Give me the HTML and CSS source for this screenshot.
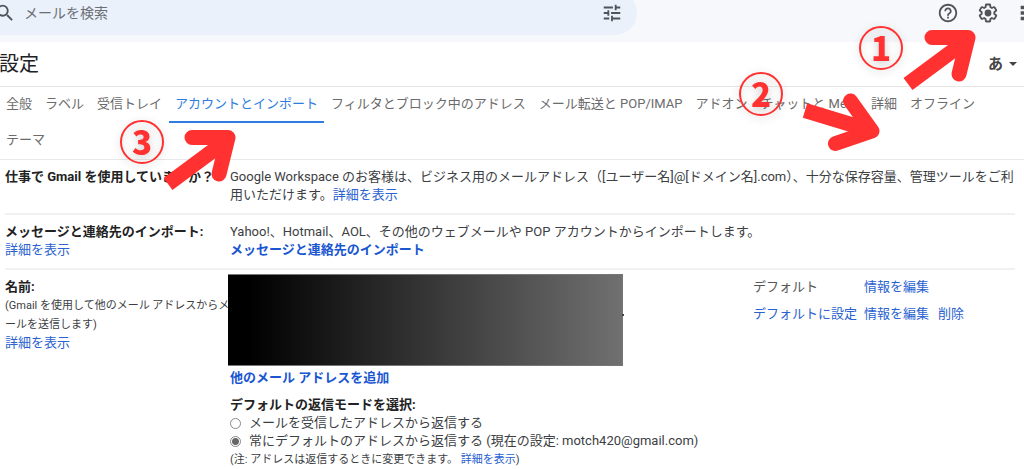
FILE: index.html
```html
<!DOCTYPE html>
<html lang="ja">
<head>
<meta charset="utf-8">
<title>設定</title>
<link rel="stylesheet" href="styles.css">
</head>
<body>
<header class="topbar">
  <form class="search" role="search">
    <svg class="icon search-icon" viewBox="0 0 24 24" aria-hidden="true"><path d="M15.5 14h-.79l-.28-.27A6.47 6.47 0 0 0 16 9.500 6.500 6.500 0 1 0 9.500 16c1.610 0 3.090-.59 4.230-1.570l.27.28v.79l5 4.990L20.490 19l-4.990-5zm-6 0C7.010 14 5 11.990 5 9.500S7.010 5 9.500 5 14 7.010 14 9.500 11.990 14 9.500 14z"/></svg>
    <input class="search-input" type="text" placeholder="メールを検索" aria-label="メールを検索">
    <button class="icon-button" type="button" aria-label="検索オプションを表示">
      <svg class="icon" viewBox="0 0 24 24"><path d="M3 17v2h6v-2H3zM3 5v2h10V5H3zm10 16v-2h8v-2h-8v-2h-2v6h2zM7 9v2H3v2h4v2h2V9H7zm14 4v-2H11v2h10zm-6-4h2V7h4V5h-4V3h-2v6z"/></svg>
    </button>
  </form>
  <div class="tools">
    <button class="icon-button" type="button" aria-label="サポート">
      <svg class="icon" viewBox="0 0 24 24"><path d="M11 18h2v-2h-2v2zm1-16C6.480 2 2 6.480 2 12s4.480 10 10 10 10-4.480 10-10S17.520 2 12 2zm0 18c-4.410 0-8-3.590-8-8s3.590-8 8-8 8 3.590 8 8-3.590 8-8 8zm0-14c-2.210 0-4 1.790-4 4h2c0-1.100.9-2 2-2s2 .9 2 2c0 2-3 1.750-3 5h2c0-2.250 3-2.500 3-5 0-2.210-1.790-4-4-4z"/></svg>
    </button>
    <button class="icon-button" type="button" aria-label="設定">
      <svg class="icon" viewBox="0 0 24 24"><path d="M13.850 22.250h-3.700c-.74 0-1.360-.54-1.450-1.270l-.27-1.890c-.27-.14-.53-.29-.79-.46l-1.800.72c-.7.26-1.470-.03-1.810-.65L2.200 15.530c-.35-.66-.2-1.440.36-1.880l1.530-1.190c-.01-.15-.02-.3-.02-.46 0-.15.01-.31.02-.46l-1.520-1.190c-.59-.45-.74-1.260-.37-1.880l1.850-3.190c.34-.62 1.110-.9 1.790-.63l1.810.73c.26-.17.52-.32.78-.46l.27-1.910c.09-.7.71-1.250 1.440-1.250h3.700c.74 0 1.360.54 1.450 1.270l.27 1.890c.27.14.53.29.79.46l1.800-.72c.71-.26 1.480.03 1.820.65l1.840 3.180c.36.66.2 1.440-.36 1.880l-1.520 1.190c.01.15.02.3.02.46s-.01.31-.02.46l1.520 1.190c.56.45.72 1.230.37 1.860l-1.860 3.220c-.34.62-1.110.9-1.800.63l-1.800-.72c-.26.17-.52.32-.78.46l-.27 1.910c-.1.68-.72 1.220-1.460 1.220zm-3.230-2h2.760l.37-2.550.53-.22c.44-.18.88-.44 1.340-.78l.45-.34 2.380.96 1.380-2.400-2.030-1.580.07-.56c.03-.26.06-.51.06-.78s-.03-.53-.06-.78l-.07-.56 2.030-1.580-1.390-2.400-2.390.96-.45-.35c-.42-.32-.87-.58-1.330-.77l-.52-.22-.37-2.550h-2.760l-.37 2.550-.53.21c-.44.19-.88.44-1.340.79l-.45.33-2.380-.95-1.390 2.390 2.030 1.580-.07.56a7 7 0 0 0-.06.79c0 .26.02.53.06.78l.07.56-2.030 1.580 1.380 2.400 2.390-.96.45.35c.43.33.86.58 1.330.77l.53.22.38 2.550z"/><circle cx="12" cy="12" r="3.700"/></svg>
    </button>
    <button class="icon-button" type="button" aria-label="アプリ">
      <svg class="icon" viewBox="0 0 24 24"><path d="M4 4h4v4H4zm0 6h4v4H4zm0 6h4v4H4zm6-12h4v4h-4zm0 6h4v4h-4zm0 6h4v4h-4zm6-12h4v4h-4zm0 6h4v4h-4zm0 6h4v4h-4z"/></svg>
    </button>
  </div>
</header>

<main>
  <div class="title-row">
    <h1 class="title">設定</h1>
    <button class="input-tool" type="button" aria-label="入力ツール">あ<span class="caret"></span></button>
  </div>

  <nav class="tabs">
    <a class="tab" href="#">全般</a>
    <a class="tab" href="#">ラベル</a>
    <a class="tab" href="#">受信トレイ</a>
    <a class="tab tab-active" href="#" aria-current="page">アカウントとインポート</a>
    <a class="tab" href="#">フィルタとブロック中のアドレス</a>
    <a class="tab" href="#">メール転送と POP/IMAP</a>
    <a class="tab" href="#">アドオン</a>
    <a class="tab" href="#">チャットと Meet</a>
    <a class="tab" href="#">詳細</a>
    <a class="tab" href="#">オフライン</a>
    <a class="tab" href="#">テーマ</a>
  </nav>

  <div class="settings">
    <section class="setting">
      <h2 class="label">仕事で Gmail を使用していますか？</h2>
      <p class="text">Google Workspace のお客様は、ビジネス用のメールアドレス（[ユーザー名]@[ドメイン名].com）、十分な保存容量、管理ツールをご利用いただけます。<a href="#">詳細を表示</a></p>
    </section>

    <section class="setting">
      <div>
        <h2 class="label">メッセージと連絡先のインポート:</h2>
        <a href="#">詳細を表示</a>
      </div>
      <div>
        <p class="text">Yahoo!、Hotmail、AOL、その他のウェブメールや POP アカウントからインポートします。</p>
        <a class="strong" href="#">メッセージと連絡先のインポート</a>
      </div>
    </section>

    <section class="setting">
      <div>
        <h2 class="label">名前:</h2>
        <p class="small hint">(Gmail を使用して他のメール アドレスからメールを送信します)</p>
        <a href="#">詳細を表示</a>
      </div>
      <div>
        <table class="addresses">
          <tr class="address-row">
            <td class="address" rowspan="2"><div class="mask"></div></td>
            <td class="status">デフォルト</td>
            <td class="actions"><a href="#">情報を編集</a></td>
          </tr>
          <tr>
            <td class="status"><a href="#">デフォルトに設定</a></td>
            <td class="actions"><a href="#">情報を編集</a><a href="#">削除</a></td>
          </tr>
        </table>
        <a class="strong" href="#">他のメール アドレスを追加</a>
        <fieldset class="reply">
          <legend class="label">デフォルトの返信モードを選択:</legend>
          <label class="option"><input class="radio" type="radio" name="reply">メールを受信したアドレスから返信する</label>
          <label class="option"><input class="radio" type="radio" name="reply" checked>常にデフォルトのアドレスから返信する (現在の設定: motch420@gmail.com)</label>
          <p class="small">(注: アドレスは返信するときに変更できます。 <a href="#">詳細を表示</a>)</p>
        </fieldset>
      </div>
    </section>
  </div>
</main>

<span class="step step-one">1</span>
<span class="step step-two">2</span>
<span class="step step-three">3</span>
<svg class="arrow arrow-one" viewBox="0 0 80 66" aria-hidden="true"><path class="shaft" d="M7 55 65 12"/><path class="head" d="M31 8.500H67L58 45"/></svg>
<svg class="arrow arrow-two" viewBox="0 0 80 66" aria-hidden="true"><path class="shaft" d="M5 20.500 66 39"/><path class="head" d="M50.500 11 72 41 35.500 53.500"/></svg>
<svg class="arrow arrow-three" viewBox="0 0 80 66" aria-hidden="true"><path class="shaft" d="M7 55 65 12"/><path class="head" d="M31 8.500H67L58 45"/></svg>
</body>
</html>
```

FILE: styles.css
```css
* { box-sizing: border-box; }
body {
  margin: 0;
  position: relative;
  overflow-x: hidden;
  background: #fff;
  color: #3c4043;
  font: 13px/18px Roboto, "Noto Sans CJK JP", sans-serif;
}
h1, h2, p { margin: 0; }
a { color: #2a62d0; text-decoration: none; }
button { padding: 0; border: 0; background: none; font: inherit; color: inherit; }

.topbar {
  display: flex;
  justify-content: space-between;
  height: 42px;
  overflow: hidden;
  background: #f6f8fc;
}
.search {
  display: flex;
  align-items: center;
  width: 63%;
  height: 44px;
  margin: -9px 0 0 -8px;
  padding: 0 14px 0 2px;
  border-radius: 0 22px 22px 0;
  background: #eaf1fb;
}
.search-input {
  flex: 1;
  margin-left: 8px;
  padding: 0;
  border: 0;
  outline: 0;
  background: none;
  color: #5f6368;
  font: 14px/20px Roboto, "Noto Sans CJK JP", sans-serif;
}
.search-input::placeholder { color: #6b6f74; opacity: 1; }
.icon { display: block; width: 22px; height: 22px; fill: #50545a; }
.icon-button { flex: none; }
.tools { display: flex; gap: 18px; margin: 2px -15px 0 0; height: 22px; }

.title-row {
  display: flex;
  align-items: center;
  justify-content: space-between;
  height: 44px;
  padding-right: 7px;
}
.title { margin-left: -1px; color: #202124; font-size: 20px; line-height: 28px; font-weight: 400; }
.input-tool { display: flex; align-items: center; gap: 6px; color: #444; font-size: 15px; font-weight: 700; }
.caret { border: 4px solid transparent; border-top-color: #444; border-bottom: 0; }

.tabs {
  display: flex;
  flex-wrap: wrap;
  column-gap: 1px;
  border-top: 1px solid #e6e6e6;
  border-bottom: 1px solid #e8e8e8;
}
.tab { height: 36px; padding: 8px 6px; color: #6b6b6b; border-bottom: 2px solid transparent; }
.tab-active { color: #2f7de1; border-bottom-color: #2f7de1; }

.settings { margin: 0 9px 0 5px; }
.setting {
  display: grid;
  grid-template-columns: 225px 1fr;
  padding: 8px 0 9px;
  border-bottom: 2px solid #f1f1f1;
}
.setting:last-child { border-bottom: 0; }
.label { padding: 0; color: #222; font-size: 13px; font-weight: 700; line-height: 18px; white-space: nowrap; }
.strong { font-weight: 700; color: #1a56d0; }
.small { font-size: 11px; line-height: 19px; }
.hint { margin-right: -3px; line-break: anywhere; }

.addresses { width: 100%; margin: -4px 0 3px -2px; border-collapse: collapse; }
.addresses td { padding: 4px 0; vertical-align: top; }
.addresses .address { padding: 0; }
.address-row { height: 27px; }
.mask {
  position: relative;
  width: 395px;
  height: 92px;
  border: 1px solid #777;
  border-left: 0;
  background: linear-gradient(90deg, #000 5%, #707070);
}
.mask::after {
  content: "";
  position: absolute;
  left: 100%;
  top: 39px;
  width: 2px;
  height: 2px;
  background: #444;
}
.status { width: 111px; color: #555; }
.actions { width: 149px; }
.actions a { margin-right: 9px; }
.reply { margin: 9px 0 0; padding: 0; border: 0; }
.option { display: flex; align-items: center; gap: 8px; }
.radio {
  appearance: none;
  width: 11px;
  height: 11px;
  margin: 0;
  border: 1px solid #888;
  border-radius: 50%;
}
.radio:checked { background: radial-gradient(circle, #666 3px, #fff 4px); }

.step {
  position: absolute;
  width: 44px;
  height: 44px;
  border: 2px solid #ff3131;
  border-radius: 50%;
  color: #ff3131;
  font: 900 33px/38px "Noto Sans CJK JP", sans-serif;
  text-align: center;
  filter: drop-shadow(0 2px 4px #0003);
}
.step-one { right: 121px; top: 26px; }
.step-two { right: 241px; top: 72px; }
.step-three { left: 120px; top: 120px; }
.arrow { position: absolute; width: 80px; height: 66px; fill: none; stroke: #ff3131; }
.shaft { stroke-width: 15; }
.head { stroke-width: 15; stroke-linecap: round; stroke-linejoin: round; }
.arrow-one { right: 43px; top: 29px; }
.arrow-two { right: 144px; top: 90px; }
.arrow-three { left: 161px; top: 129px; }
```
